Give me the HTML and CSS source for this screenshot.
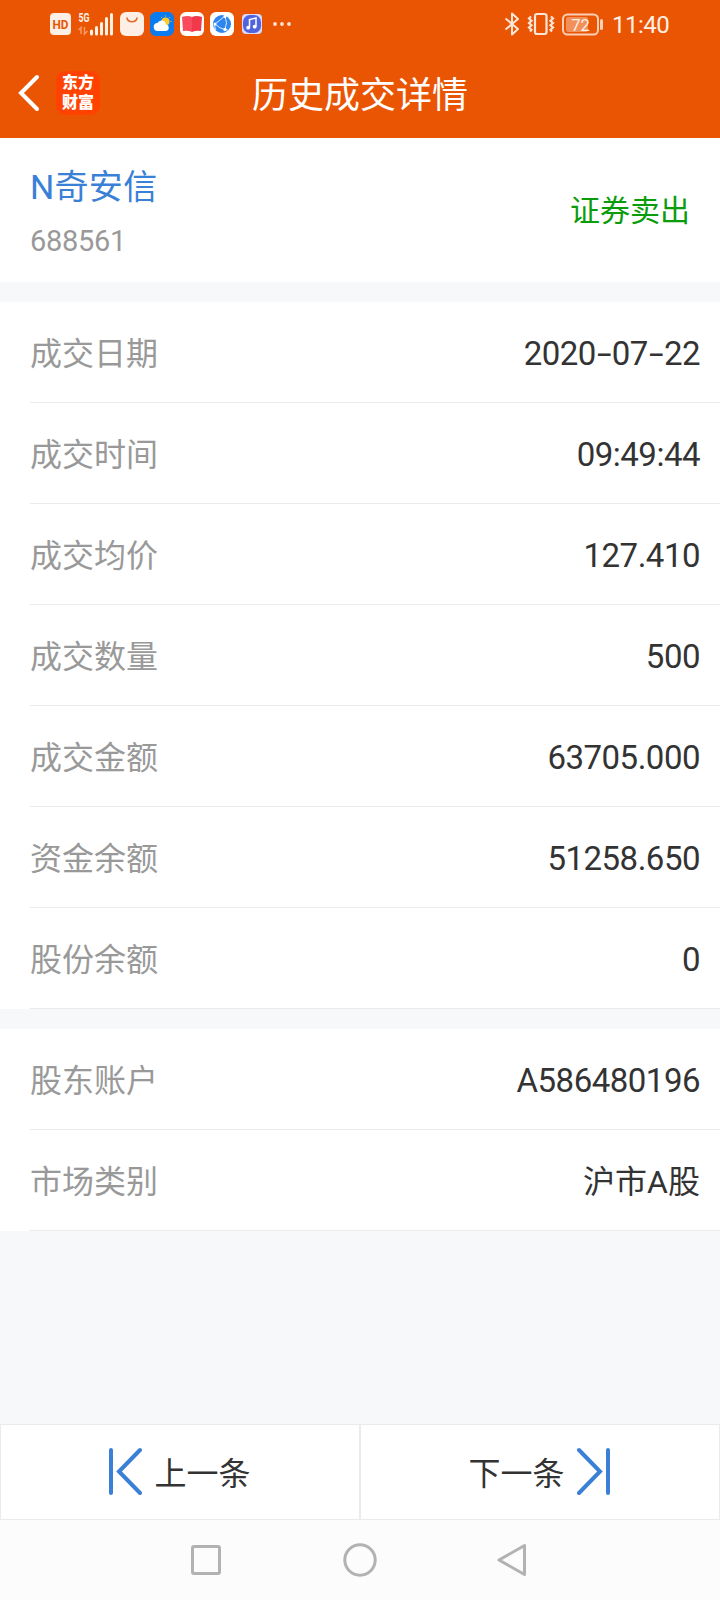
FILE: index.html
```
<!DOCTYPE HTML>
<html lang="zh-CN">
<head>
	<meta charset="utf-8" />
	<title>历史成交详情</title>
	<link rel="stylesheet" href="styles.css">
</head>
<body>

<div class="top">
	<div class="status">
		<svg class="hd" width="21" height="22" viewBox="0 0 21 22"><rect width="21" height="22" rx="4" fill="#fdeee6"/><text x="10.5" y="16" text-anchor="middle" font-size="13" font-weight="bold" textLength="16" lengthAdjust="spacingAndGlyphs" fill="#e85600">HD</text></svg>
		<svg class="signal" width="36" height="32" viewBox="0 -4 36 32"><text x="0.5" y="10" font-size="12.500" font-weight="bold" textLength="11" lengthAdjust="spacingAndGlyphs" fill="#fff0e4">5G</text><path d="M0.500 18L3 15.500V22M6.500 15V22L9.500 19" stroke="#f69a66" stroke-width="1.500" fill="none"/><path d="M13.500 19v3M18.500 15.500V22M23.500 11.500V22M28.500 6.500V22M33.500 2.500V22" stroke="#fff0e4" stroke-width="3" stroke-linecap="round"/></svg>
		<svg class="app" viewBox="0 0 24 24"><rect width="24" height="24" rx="6" fill="#fdeee6"/><path d="M7 6c1 5 9 5 10 0" stroke="#e06a2c" stroke-width="1.500" fill="none" stroke-linecap="round"/></svg>
		<svg class="app" viewBox="0 0 24 24"><rect width="24" height="24" rx="6" fill="#0b7cf0"/><circle cx="15.500" cy="9.500" r="4" fill="#ffc928"/><path d="M15.500 3.500v1M20 5l-.7.7M21.500 9.500h-1M11 5l.7.7" stroke="#ffc928"/><path d="M8 19a4 4 0 0 1-.5-8 4.500 4.500 0 0 1 8.500 1.500 3.300 3.300 0 0 1 0 6.500z" fill="#fff"/></svg>
		<svg class="app" viewBox="0 0 24 24"><rect width="24" height="24" rx="6" fill="#fff"/><path d="M2 5q6-2 10 0v15q-4-2-9-1z" fill="#fb4a5b"/><path d="M22 5q-6-2-10 0v15q4-2 9-1z" fill="#f2394c"/></svg>
		<svg class="app" viewBox="0 0 24 24"><rect width="24" height="24" rx="6" fill="#fff"/><circle cx="12" cy="12" r="9" fill="#2f86ee"/><path d="M15 4L5 12q5 5 10 5.500Q18 11 15 4M5 12q-1 3 1 6M15 17.500l4 1" stroke="#d9ecff" fill="none"/><g fill="#fff"><circle cx="15" cy="4.500" r="1.500"/><circle cx="5" cy="12" r="1.500"/><circle cx="15" cy="17.500" r="1.700"/></g></svg>
		<svg class="music" width="20" height="20" viewBox="0 0 20 20"><rect width="20" height="20" rx="4" fill="#d9d9fa"/><rect x="1" y="1" width="18" height="18" rx="7" fill="#5263de"/><path d="M7.500 13.500V5.500l6.500-1.500v8.500" stroke="#fff" stroke-width="1.500" fill="none"/><circle cx="6.200" cy="13.700" r="1.900" fill="#fff"/><circle cx="12.700" cy="12.700" r="1.900" fill="#fff"/></svg>
		<svg class="dots" width="18" height="4" viewBox="0 0 18 4" fill="#ffe3d2"><circle cx="2" cy="2" r="1.900"/><circle cx="9" cy="2" r="1.900"/><circle cx="16" cy="2" r="1.900"/></svg>

		<div class="status-right">
			<svg width="16" height="24" viewBox="0 0 16 24" fill="none" stroke="#fde6d8" stroke-width="2"><path d="M1.500 6.500L14 17l-6 5.500v-21L14 7 1.500 17.500" stroke-linejoin="round"/></svg>
			<svg class="vibrate" width="28" height="24" viewBox="0 0 28 24" fill="none" stroke="#fde6d8" stroke-width="2.200"><rect x="8" y="2" width="11.500" height="20" rx="2"/><path d="M4 4.500L2 6.500l2.500 2.300L2 11l2.500 2.300L2 15.500l2.500 2.300L3 19.500M24 4.500l2 2-2.500 2.300L26 11l-2.500 2.300 2.500 2.200-2.500 2.300 1.500 1.700"/></svg>
			<svg class="battery" width="42" height="24" viewBox="0 0 42 24"><rect x="1" y="2.500" width="35" height="20" rx="4.500" fill="none" stroke="#fbcfb6" stroke-width="2"/><rect x="4" y="5" width="22" height="15" rx="2" fill="#f19058"/><path d="M39.500 8.500v8" stroke="#fbcfb6" stroke-width="3" stroke-linecap="round"/><text x="18.500" y="18.500" text-anchor="middle" font-size="16.500" fill="#fff0e6">72</text></svg>
			<span class="clock">11:40</span>
		</div>
	</div>

	<div class="header">
		<svg class="back" width="24" height="38" viewBox="0 0 24 38"><path d="M21 3L5 19l16 16" fill="none" stroke="#fff" stroke-width="4" stroke-linecap="round"/></svg>
		<div class="logo">东方<br>财富</div>
		<h1>历史成交详情</h1>
	</div>
</div>

<div class="stock">
	<div>
		<p class="name">N奇安信</p>
		<p class="code">688561</p>
	</div>
	<span class="side">证券卖出</span>
</div>

<div class="list">
	<div class="row"><span class="label">成交日期</span><span class="value">2020<i>-</i>07<i>-</i>22</span></div>
	<div class="row"><span class="label">成交时间</span><span class="value">09:49:44</span></div>
	<div class="row"><span class="label">成交均价</span><span class="value">127.410</span></div>
	<div class="row"><span class="label">成交数量</span><span class="value">500</span></div>
	<div class="row"><span class="label">成交金额</span><span class="value">63705.000</span></div>
	<div class="row"><span class="label">资金余额</span><span class="value">51258.650</span></div>
	<div class="row"><span class="label">股份余额</span><span class="value">0</span></div>
</div>

<div class="list">
	<div class="row"><span class="label">股东账户</span><span class="value">A586480196</span></div>
	<div class="row"><span class="label">市场类别</span><span class="market">沪市A股</span></div>
</div>

<div class="pager">
	<div class="page-btn">
		<svg width="34" height="48" viewBox="0 0 34 48"><path d="M3 3v43M32 3L11 24.500l21 21.500"/></svg>
		<span>上一条</span>
	</div>
	<div class="page-btn next">
		<span>下一条</span>
		<svg width="34" height="48" viewBox="0 0 34 48"><path d="M31 3v43M2 3l21 21.500L2 46"/></svg>
	</div>
</div>

<div class="navbar">
	<svg width="34" height="34" viewBox="0 0 34 34"><rect x="3.500" y="3.500" width="27" height="27" rx="1.500"/></svg>
	<svg width="34" height="34" viewBox="0 0 34 34"><circle cx="17" cy="17" r="15.200"/></svg>
	<svg width="34" height="34" viewBox="0 0 34 34"><path d="M27.500 2.500v29L2 17z"/></svg>
</div>

</body>
</html>
```
FILE: styles.css
```
* {box-sizing: border-box;}

body {
	margin: 0;
	height: 1600px;
	display: flex;
	flex-direction: column;
	background: #f6f8fa;
	color: #333;
	font-family: Roboto, "Noto Sans CJK SC", sans-serif;
}

p, h1 {margin: 0; font-weight: normal;}

svg {display: block; flex: none;}

.top {
	height: 138px;
	background: #ea5504;
	color: #fff;
}

/* phone status bar */
.status {
	height: 48px;
	padding: 0 51px 0 50px;
	display: flex;
	align-items: center;
}

.signal {margin: 0 6px 0 7px;}

.app {width: 24px; height: 24px; margin-right: 6px;}

.music {margin-left: 2px;}

.dots {margin-left: 11px;}

.status-right {
	margin-left: auto;
	display: flex;
	align-items: center;
}

.vibrate {margin-left: 7px;}

.battery {margin: 0 8px 0 7px;}

.clock {
	width: 57px;
	padding-top: 2px;
	color: #fff0e6;
	font-size: 24px;
	line-height: 46px;
	letter-spacing: -0.5px;
	white-space: nowrap;
}

.header {
	height: 90px;
	padding: 0 16px;
	display: grid;
	grid-template-columns: 24px 44px 1fr 84px;
	column-gap: 16px;
	align-items: center;
}

.logo {
	height: 44px;
	padding-top: 2px;
	border-radius: 9px;
	background: #ff4200;
	font-size: 16px;
	font-weight: 900;
	line-height: 20px;
	text-align: center;
}

.header h1 {
	padding-top: 5px;
	font-size: 36px;
	line-height: 50px;
	text-align: center;
}

.stock {
	height: 144px;
	margin-bottom: 20px;
	padding: 0 30px;
	display: flex;
	justify-content: space-between;
	align-items: center;
	background: #fff;
}

.name {
	padding-top: 8px;
	color: #3a80d7;
	font-size: 34px;
	letter-spacing: 0.3px;
	line-height: 54px;
}

.code {
	color: #999;
	font-size: 29px;
	letter-spacing: -0.3px;
	line-height: 54px;
}

.side {
	padding-bottom: 4px;
	color: #0a9c0a;
	font-size: 30px;
}

.list {
	margin-bottom: 20px;
	padding-left: 30px;
	background: #fff;
}

.row {
	height: 101px;
	padding-right: 20px;
	display: flex;
	justify-content: space-between;
	align-items: center;
	border-bottom: 1px solid #ebebed;
	font-size: 32px;
}

.label {
	padding-bottom: 3px;
	color: #999;
}

.value {
	padding-top: 3px;
	font-size: 33px;
	letter-spacing: -0.5px;
}

/* long dashes in the date */
.value i {
	display: inline-block;
	width: 16px;
	font-style: normal;
	text-align: center;
	transform: scaleX(1.6);
}

.market {padding-bottom: 3px;}

.pager {
	height: 96px;
	margin-top: auto;
	display: flex;
	border: 1px solid #ebebee;
	background: #fff;
}

.page-btn {
	flex: 1;
	padding: 0 1px 2px 0;
	display: flex;
	justify-content: center;
	align-items: center;
	gap: 12px;
	font-size: 32px;
}

.page-btn span {padding-bottom: 1px;}

.page-btn svg {
	fill: none;
	stroke: #3a80d7;
	stroke-width: 4;
	stroke-linecap: round;
}

.next {border-left: 2px solid #ebebee;}

.navbar {
	height: 80px;
	display: flex;
	justify-content: center;
	align-items: center;
	gap: 120px;
	background: #fcfcfc;
}

.navbar svg {
	fill: none;
	stroke: #b2b2b2;
	stroke-width: 3;
	stroke-linejoin: round;
}
```
